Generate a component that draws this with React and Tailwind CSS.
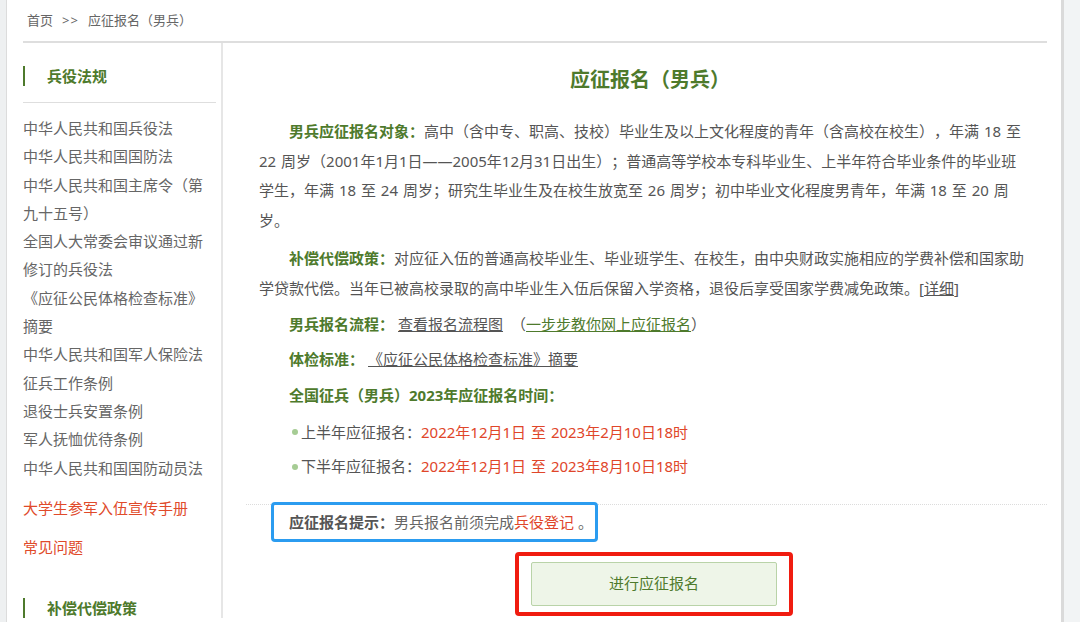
import React from 'react';

const laws = [
  '中华人民共和国兵役法',
  '中华人民共和国国防法',
  '中华人民共和国主席令（第九十五号）',
  '全国人大常委会审议通过新修订的兵役法',
  '《应征公民体格检查标准》摘要',
  '中华人民共和国军人保险法',
  '征兵工作条例',
  '退役士兵安置条例',
  '军人抚恤优待条例',
  '中华人民共和国国防动员法',
];

function SideHeading({ children }) {
  return (
    <div className="flex items-center h-[20px]">
      <span className="w-[2px] h-[20px] bg-[#4e7a2c]"></span>
      <span className="ml-[22px] text-[15px] font-bold text-[#4e7a2c]">{children}</span>
    </div>
  );
}

function Label({ children }) {
  return <span className="font-bold text-[#4e7a2c]">{children}</span>;
}

export default function App() {
  return (
    <div className="w-full h-[622px] flex overflow-hidden bg-[#f2f4f5] [text-spacing-trim:space-all] font-['Noto_Sans','Noto_Sans_CJK_SC',sans-serif]">
      <div className="w-[7px] shrink-0 bg-[#eef0f1] border-r border-[#dcdcdc]"></div>

      <div className="w-[1057px] shrink-0 bg-white border-r-[3px] border-[#dadada] pl-[16px] pr-[14px]">
        {/* breadcrumb */}
        <div className="h-[43px] flex items-center text-[13px] text-[#666] border-b-2 border-[#dedede]">
          <span className="ml-[4px]">首页</span>
          <span className="mx-[9px] tracking-[1px]">&gt;&gt;</span>
          <span>应征报名（男兵）</span>
        </div>

        <div className="flex">
          {/* sidebar */}
          <aside className="w-[200px] shrink-0 border-r-2 border-[#e6e6e6] pt-[23px]">
            <SideHeading>兵役法规</SideHeading>
            <div className="mt-[16px] w-[193px] border-b border-[#dedede]"></div>
            <ul className="mt-[11px] w-[186px] text-[15px] leading-[28.3px] text-[#666]">
              {laws.map((item) => (
                <li key={item}>{item}</li>
              ))}
            </ul>
            <div className="mt-[12px] text-[15px] leading-[28px] text-[#e04a2a]">大学生参军入伍宣传手册</div>
            <div className="mt-[11px] text-[15px] leading-[28px] text-[#e04a2a]">常见问题</div>
            <div className="mt-[37px]">
              <SideHeading>补偿代偿政策</SideHeading>
            </div>
          </aside>

          {/* content */}
          <main className="flex-1 pt-[22px]">
            <div className="pl-[36px] pr-[16px]">
              <h1 className="ml-[10px] text-center text-[20px] leading-[30px] font-bold text-[#4e7a2c]">应征报名（男兵）</h1>

              <div className="mt-[22px] text-[15px] leading-[29.5px] text-[#555] [word-spacing:1px]">
                <p className="indent-[30px] mb-[9px]">
                  <Label>男兵应征报名对象：</Label>
                  高中（含中专、职高、技校）毕业生及以上文化程度的青年（含高校在校生），年满 18 至 22 周岁（2001年1月1日——2005年12月31日出生）；普通高等学校本专科毕业生、上半年符合毕业条件的毕业班学生，年满 18 至 24 周岁；研究生毕业生及在校生放宽至 26 周岁；初中毕业文化程度男青年，年满 18 至 20 周岁。
                </p>
                <p className="indent-[30px] mb-[7px]">
                  <Label>补偿代偿政策：</Label>
                  对应征入伍的普通高校毕业生、毕业班学生、在校生，由中央财政实施相应的学费补偿和国家助学贷款代偿。当年已被高校录取的高中毕业生入伍后保留入学资格，退役后享受国家学费减免政策。[<span className="underline">详细</span>]
                </p>
                <p className="pl-[30px] mb-[5px]">
                  <Label>男兵报名流程：</Label>
                  <span className="ml-[4px] underline">查看报名流程图</span>
                  <span className="ml-[8px]">（</span>
                  <span className="underline text-[#4e7a2c]">一步步教你网上应征报名</span>
                  <span>）</span>
                </p>
                <p className="pl-[30px] mb-[7px]">
                  <Label>体检标准：</Label>
                  <span className="ml-[4px] underline">《应征公民体格检查标准》摘要</span>
                </p>
                <p className="pl-[30px] mb-[7px]">
                  <Label>全国征兵（男兵）2023年应征报名时间：</Label>
                </p>
                <p className="pl-[33px] mb-[5px] flex items-center">
                  <span className="w-[6px] h-[6px] rounded-full bg-[#a6cc94] mr-[3px]"></span>
                  上半年应征报名：<span className="text-[#e0462a]">2022年12月1日 至 2023年2月10日18时</span>
                </p>
                <p className="pl-[33px] flex items-center">
                  <span className="w-[6px] h-[6px] rounded-full bg-[#a6cc94] mr-[3px]"></span>
                  下半年应征报名：<span className="text-[#e0462a]">2022年12月1日 至 2023年8月10日18时</span>
                </p>
              </div>
            </div>

            <div className="mt-[22px] ml-[23px] border-t border-dotted border-[#dcdcdc]">
              <div className="-mt-[3px] ml-[25px] inline-block border-[3px] border-[#2b9cf0] rounded-[4px] pl-[15px] pr-[2px] h-[40px] leading-[34px] text-[15px] text-[#666]">
                <span className="font-bold text-[#555]">应征报名提示：</span>
                男兵报名前须完成<span className="text-[#e0462a]">兵役登记</span> 。
              </div>
            </div>

            <div className="mt-[10px] ml-[292px] w-[278px] h-[64px] border-[4px] border-[#f01c10] rounded-[4px] flex items-center justify-center">
              <button className="w-[246px] h-[44px] bg-[#eef5e8] border border-[#b9d3a8] rounded-[2px] text-[15px] text-[#4e7a2c]">
                进行应征报名
              </button>
            </div>
          </main>
        </div>
      </div>

      <div className="flex-1"></div>
    </div>
  );
}
